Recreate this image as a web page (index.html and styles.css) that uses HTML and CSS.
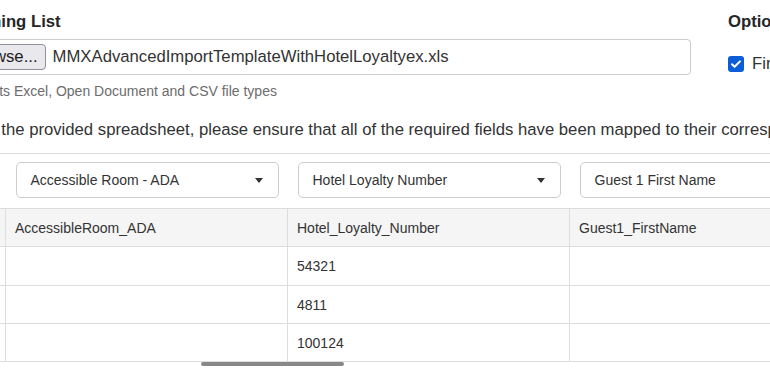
FILE: index.html
```html
<!DOCTYPE html>
<html lang="en">
<head>
    <meta charset="UTF-8">
    <meta name="viewport" content="width=device-width, initial-scale=1.0">
    <title>Import Rooming List</title>
    <link rel="stylesheet" href="styles.css">
</head>
<body>
    <div class="page">
        <div class="top">
            <div class="upload">
                <h2 class="section-title">Rooming List</h2>
                <div class="file-box">
                    <span class="file-btn">Browse...</span>
                    <span class="file-name">MMXAdvancedImportTemplateWithHotelLoyaltyex.xls</span>
                </div>
                <p class="help">Supports Excel, Open Document and CSV file types</p>
            </div>
            <div class="options">
                <h2 class="section-title">Options</h2>
                <label class="option">
                    <span class="check">
                        <svg width="16" height="16" viewBox="0 0 16 16"><path d="M4 8.2l2.6 2.6L12 5.4" fill="none" stroke="#fff" stroke-width="2" stroke-linecap="round" stroke-linejoin="round"/></svg>
                    </span>
                    First row contains column headers
                </label>
            </div>
        </div>

        <p class="intro">Using the provided spreadsheet, please ensure that all of the required fields have been mapped to their corresponding columns.</p>
        <hr class="divider">

        <table class="mapping">
            <colgroup>
                <col class="col-first">
                <col class="col-field">
                <col class="col-field">
                <col class="col-field">
                <col class="col-field">
            </colgroup>
            <thead>
                <tr class="select-row">
                    <th></th>
                    <th><div class="select"><span>Accessible Room - ADA</span><span class="caret"></span></div></th>
                    <th><div class="select"><span>Hotel Loyalty Number</span><span class="caret"></span></div></th>
                    <th><div class="select"><span>Guest 1 First Name</span><span class="caret"></span></div></th>
                    <th><div class="select"><span>Guest 1 Last Name</span><span class="caret"></span></div></th>
                </tr>
                <tr class="head-row">
                    <th></th>
                    <th>AccessibleRoom_ADA</th>
                    <th>Hotel_Loyalty_Number</th>
                    <th>Guest1_FirstName</th>
                    <th>Guest1_LastName</th>
                </tr>
            </thead>
            <tbody>
                <tr class="first-row">
                    <td></td>
                    <td></td>
                    <td>54321</td>
                    <td></td>
                    <td></td>
                </tr>
                <tr>
                    <td></td>
                    <td></td>
                    <td>4811</td>
                    <td></td>
                    <td></td>
                </tr>
                <tr>
                    <td></td>
                    <td></td>
                    <td>100124</td>
                    <td></td>
                    <td></td>
                </tr>
            </tbody>
        </table>
        <div class="scrollbar"><div class="thumb"></div></div>
    </div>
</body>
</html>
```

FILE: styles.css
```css
html, body {
    margin: 0;
    padding: 0;
    overflow: hidden;
}
body {
    font-family: 'Liberation Sans', Arial, sans-serif;
    font-size: 16.7px;
    color: #333;
    background-color: #ffffff;
    width: 770px;
    height: 371px;
}
.page {
    margin-left: -46px;
    white-space: nowrap;
}
.top {
    display: flex;
    gap: 37px;
}
.upload {
    width: 737px;
    flex-shrink: 0;
}
.section-title {
    margin: 12px 0 0;
    font-size: 16.7px;
    line-height: 20px;
    font-weight: bold;
    color: #262626;
}
.file-box {
    margin-top: 7px;
    height: 36px;
    box-sizing: border-box;
    border: 1px solid #cccccc;
    border-radius: 4px;
    padding: 0 5px;
    display: flex;
    align-items: center;
    gap: 7px;
}
.file-btn {
    height: 26px;
    box-sizing: border-box;
    padding: 0 7px;
    line-height: 24px;
    background-color: #e9e9ed;
    border: 1px solid #8f8f9d;
    border-radius: 4px;
    color: #1b1b1b;
}
.file-name {
    color: #333;
}
.help {
    margin: 7px 0 0;
    font-size: 14px;
    line-height: 18px;
    color: #6c6c6c;
}
.option {
    margin-top: 20px;
    height: 24px;
    display: flex;
    align-items: center;
    gap: 8px;
}
.check {
    width: 16px;
    height: 16px;
    border-radius: 3px;
    background-color: #0b5ed7;
    display: flex;
}
.intro {
    margin: 18px 0 0;
    line-height: 24px;
}
.divider {
    margin: 11px 0 0;
    border: none;
    border-top: 1px solid #dddddd;
}
.mapping {
    border-collapse: collapse;
    table-layout: fixed;
    width: 1179px;
    font-size: 14px;
}
.col-first {
    width: 51px;
}
.col-field {
    width: 282px;
}
.select-row th {
    padding: 8px 9px 10px 10px;
    font-weight: normal;
    text-align: left;
}
.select {
    height: 36px;
    box-sizing: border-box;
    border: 1px solid #cccccc;
    border-radius: 5px;
    padding: 0 15px 0 14px;
    display: flex;
    align-items: center;
    justify-content: space-between;
    color: #333;
}
.caret {
    width: 0;
    height: 0;
    border-top: 5px solid #333;
    border-left: 4px solid transparent;
    border-right: 4px solid transparent;
}
.head-row th {
    background-color: #f5f5f5;
    font-weight: normal;
    text-align: left;
}
.head-row th,
.mapping td {
    height: 37px;
    padding: 0 9px;
    border: 1px solid #dddddd;
    color: #333;
}
.first-row td {
    height: 38px;
}
.scrollbar {
    height: 4px;
}
.thumb {
    margin-left: 247px;
    width: 143px;
    height: 4px;
    border-radius: 2px;
    background-color: #888888;
}
```
